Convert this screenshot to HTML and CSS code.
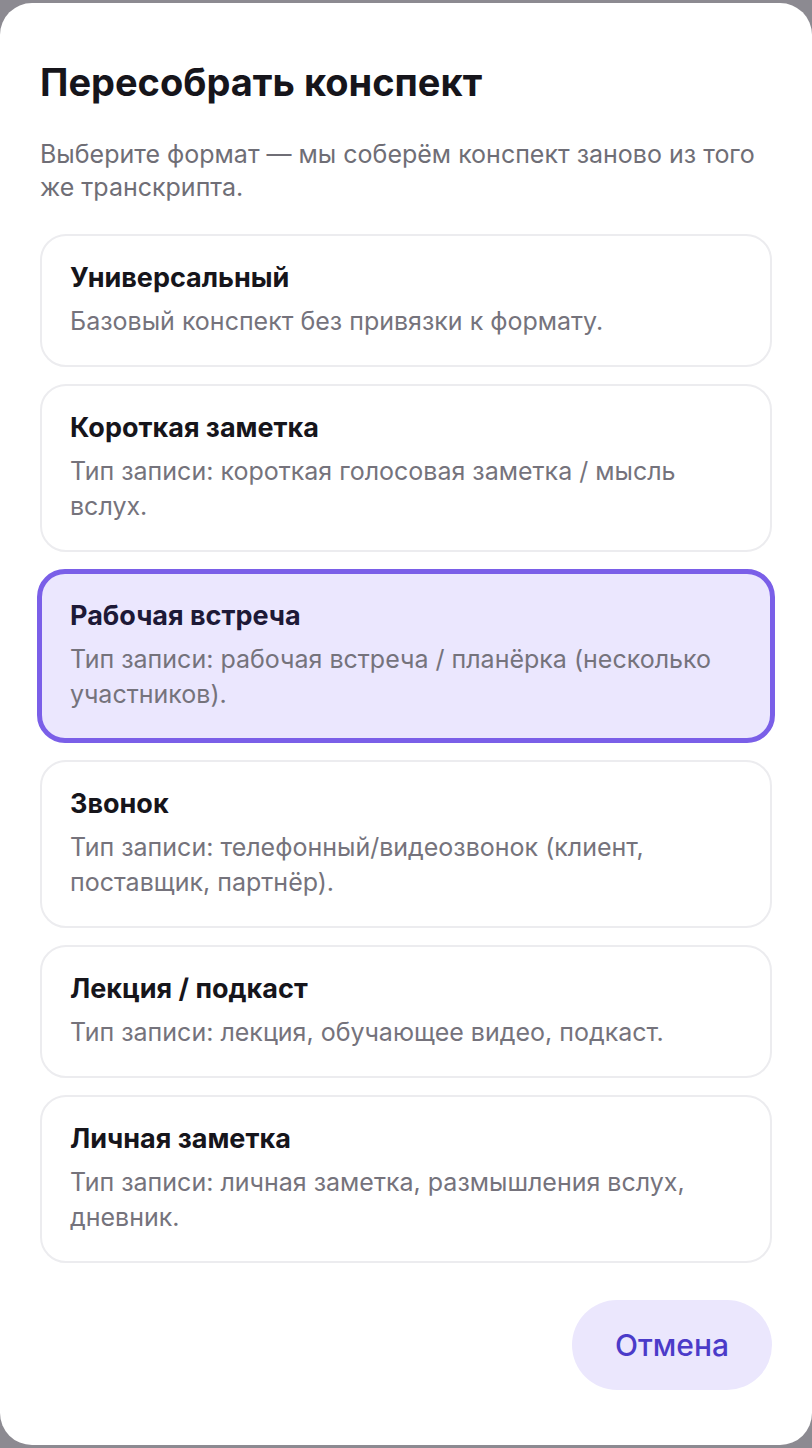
FILE: index.html
```html
<!DOCTYPE html>
<html lang="ru">
<head>
<meta charset="utf-8">
<title>Пересобрать конспект</title>
<link rel="stylesheet" href="styles.css">
</head>
<body>
<div class="sheet">
  <h1 class="title">Пересобрать конспект</h1>
  <p class="subtitle">Выберите формат — мы соберём конспект заново из того же транскрипта.</p>
  <div class="options">
    <div class="option">
      <div class="opt-title">Универсальный</div>
      <div class="opt-desc">Базовый конспект без привязки к формату.</div>
    </div>
    <div class="option">
      <div class="opt-title">Короткая заметка</div>
      <div class="opt-desc">Тип записи: короткая голосовая заметка / мысль вслух.</div>
    </div>
    <div class="option selected">
      <div class="opt-title">Рабочая встреча</div>
      <div class="opt-desc">Тип записи: рабочая встреча / планёрка (несколько участников).</div>
    </div>
    <div class="option">
      <div class="opt-title">Звонок</div>
      <div class="opt-desc">Тип записи: телефонный/видеозвонок (клиент, поставщик, партнёр).</div>
    </div>
    <div class="option">
      <div class="opt-title">Лекция / подкаст</div>
      <div class="opt-desc">Тип записи: лекция, обучающее видео, подкаст.</div>
    </div>
    <div class="option">
      <div class="opt-title">Личная заметка</div>
      <div class="opt-desc">Тип записи: личная заметка, размышления вслух, дневник.</div>
    </div>
  </div>
  <div class="actions">
    <button class="cancel">Отмена</button>
  </div>
</div>
</body>
</html>
```
FILE: styles.css
```css
html, body {
  margin: 0;
  padding: 0;
}
body {
  background: #8c8a91;
  font-family: Inter, "Noto Sans", sans-serif;
  width: 812px;
  height: 1448px;
  overflow: hidden;
}
.sheet {
  margin-top: 3px;
  height: 1442px;
  box-sizing: border-box;
  background: #ffffff;
  border-radius: 32px;
  padding: 56px 40px 0 40px;
}
.title {
  margin: 0;
  font-size: 38px;
  line-height: 46px;
  font-weight: 700;
  color: #16151b;
}
.subtitle {
  margin: 33px 0 0 0;
  font-size: 25px;
  line-height: 33px;
  color: #6f6e76;
  font-weight: 400;
}
.options {
  margin-top: 30px;
  display: flex;
  flex-direction: column;
  gap: 17px;
}
.option {
  border: 2px solid #ececef;
  border-radius: 26px;
  padding: 25px 28px 26px 28px;
  background: #ffffff;
}
.option.selected {
  background: #ebe7fe;
  border: 5px solid #7a5fe8;
  border-radius: 28px;
  margin: 0 -3px;
}
.opt-title {
  font-size: 27px;
  line-height: 34px;
  font-weight: 700;
  color: #16151b;
}
.selected .opt-title {
  color: #1d1937;
}
.opt-desc {
  margin-top: 9px;
  font-size: 25px;
  line-height: 35px;
  color: #75737c;
}
.actions {
  display: flex;
  justify-content: flex-end;
  margin-top: 37px;
}
.cancel {
  width: 200px;
  height: 90px;
  border: none;
  border-radius: 45px;
  background: #ebe7fd;
  color: #4b3bc9;
  font-family: Inter, "Noto Sans", sans-serif;
  font-size: 30px;
  font-weight: 500;
}
```
